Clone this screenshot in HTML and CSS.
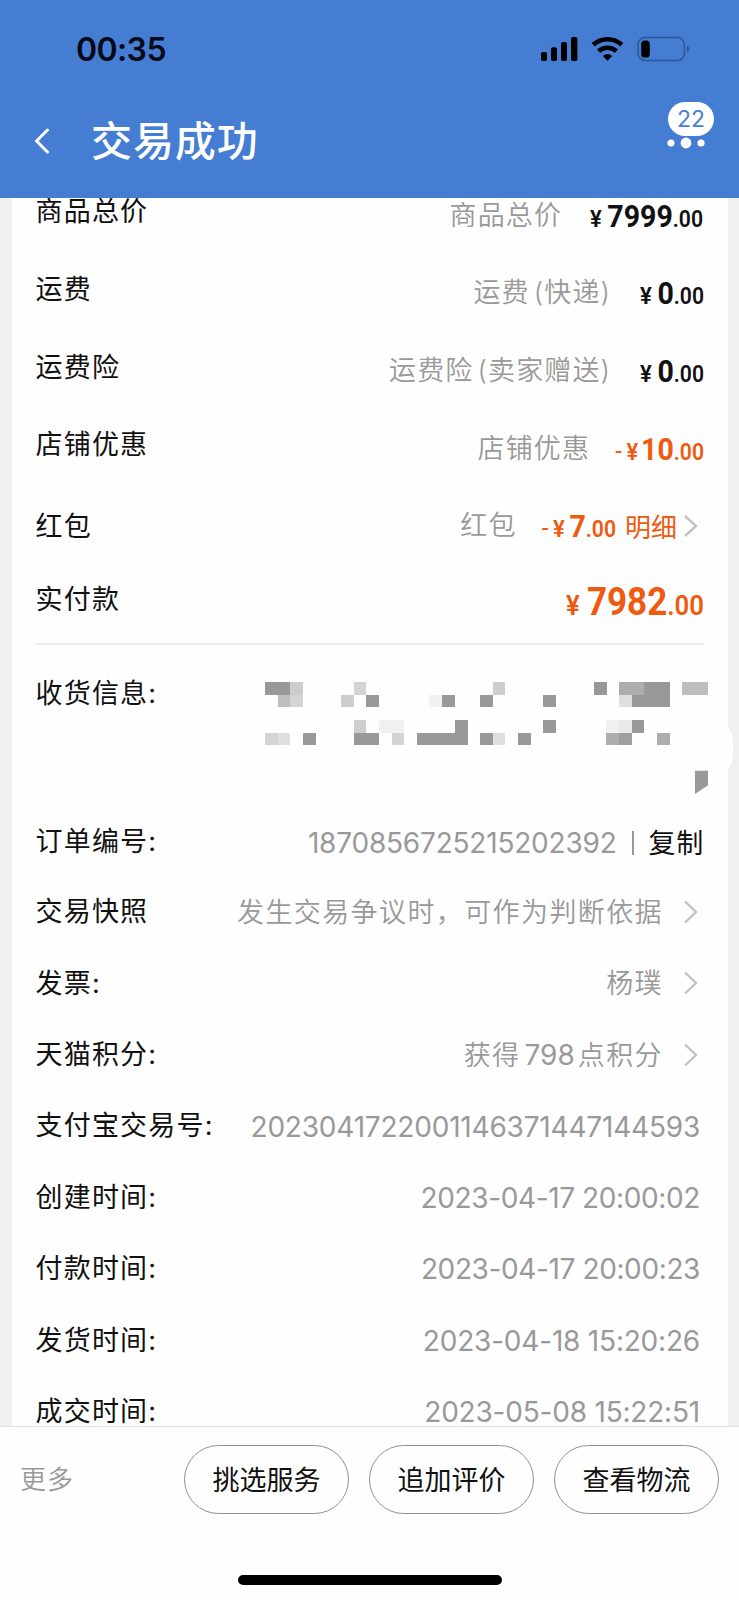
FILE: index.html
```html
<!DOCTYPE html>
<html lang="zh-CN">
<head>
<meta charset="utf-8">
<title>交易成功</title>
<link rel="stylesheet" href="styles.css">
</head>
<body>
<div class="phone">
  <header class="header">
    <div class="status">
      <span class="clock">00:35</span>
      <svg class="status-icons" width="150" height="26" viewBox="540 36 150 26">
        <rect x="541" y="52" width="6" height="9" rx="1.8"/>
        <rect x="551" y="47.3" width="6" height="13.7" rx="1.8"/>
        <rect x="561" y="42" width="6" height="19" rx="1.8"/>
        <rect x="571" y="37" width="6.4" height="24" rx="1.8"/>
        <path class="wave" d="M593.2 44.8 A21 21 0 0 1 621.8 44.8 M598.6 51.3 A13 13 0 0 1 616.4 51.3"/>
        <path d="M607.5 60.8 L602.8 56 Q607.5 51.8 612.2 56 Z"/>
        <rect class="cell" x="638" y="37.6" width="46.4" height="22.8" rx="7"/>
        <path class="cap" d="M687 45.5 Q689.4 46.6 689.4 49 Q689.4 51.4 687 52.6 Z"/>
        <rect x="641.2" y="40.5" width="8.6" height="17" rx="3.6"/>
      </svg>
    </div>
    <div class="nav">
      <svg class="back" width="16" height="26" viewBox="0 0 16 26"><path d="M13.5 2 L2.5 13 L13.5 24"/></svg>
      <h1 class="title">交易成功</h1>
      <div class="more-menu">
        <span class="badge">22</span>
        <svg width="38" height="12" viewBox="0 0 38 12"><circle cx="4" cy="6" r="3.6"/><circle cx="19" cy="6" r="5.4"/><circle cx="34" cy="6" r="3.6"/></svg>
      </div>
    </div>
  </header>

  <main class="content">
    <section class="card">
      <div class="row price-row"><span class="label">商品总价</span><span class="note">商品总价</span><span class="price w-7999"><i>¥</i><b>7999</b><em>.00</em></span></div>
      <div class="row price-row"><span class="label">运费</span><span class="note">运费 (快递)</span><span class="price"><i>¥</i><b>0</b><em>.00</em></span></div>
      <div class="row price-row"><span class="label">运费险</span><span class="note">运费险 (卖家赠送)</span><span class="price"><i>¥</i><b>0</b><em>.00</em></span></div>
      <div class="row price-row"><span class="label">店铺优惠</span><span class="note">店铺优惠</span><span class="price off w-10"><u>-</u><i>¥</i><b>10</b><em>.00</em></span></div>
      <div class="row price-row level"><span class="label">红包</span><span class="note">红包</span><span class="price off w-7"><u>-</u><i>¥</i><b>7</b><em>.00</em></span><span class="detail">明细</span><svg class="chev" width="14" height="24" viewBox="0 0 14 24"><path d="M1 2 L12 12 L1 22"/></svg></div>
      <div class="row total-row"><span class="label">实付款</span><span class="price off total"><i>¥</i><b>7982</b><em>.00</em></span></div>
      <div class="row address-row">
        <span class="label">收货信息:</span>
        <svg class="mosaic" width="443" height="112" viewBox="45 67 1329 336" shape-rendering="crispEdges">
          <g fill="#999"><path d="M45 67h76v38h-76z M349 105h38v38h-38z M576 105h39v38h-39z M690 105h38v38h-38z M879 105h39v38h-39z M1032 67h38v38h-38z M1183 67h77v76h-115v-38h38z M159 219h39v38h-39z M312 219h75v38h-75z M501 219h114v-38h39v76h-153z M690 219h38v38h-38z M804 219h39v38h-39z M879 181h39v38h-39z M1145 181h38v38h-38z"/></g>
          <path fill="#999" shape-rendering="auto" d="M1335 333h39v44l-39 26z"/>
          <path fill="#cdcdcd" d="M121 67h38v38h-38z M273 105h38v38h-38z M729 67h37v38h-37z M312 181h37v38h-37z"/>
          <path fill="#bebebe" d="M84 105h37v38h-37z M1296 67h78v38h-78z"/>
          <path fill="#d4d4d4" d="M121 105h38v38h-38z M312 67h37v38h-37z M45 219h39v38h-39z M426 219h36v38h-36z"/>
          <path fill="#dfdfdf" d="M84 219h37v38h-37z M729 219h37v38h-37z M1107 105h38v38h-38z"/>
          <path fill="#f1f1f1" d="M538 105h38v38h-38z M387 181h75v38h-75z M1069 181h38v38h-38z"/>
          <path fill="#e9e9e9" d="M1107 181h38v38h-38z"/>
          <path fill="#adadad" d="M1107 67h76v38h-76z M1069 219h38v38h-38z M1221 219h39v38h-39z"/>
          <path fill="#9f9f9f" d="M1107 219h38v38h-38z"/>
        </svg>
      </div>
      <div class="row order-row"><span class="label">订单编号:</span><span class="value num wide">1870856725215202392</span><span class="bar"></span><span class="copy">复制</span></div>
      <div class="row"><span class="label">交易快照</span><span class="value link">发生交易争议时，可作为判断依据</span><svg class="chev" width="14" height="24" viewBox="0 0 14 24"><path d="M1 1.5 L12 12 L1 22.5"/></svg></div>
      <div class="row"><span class="label">发票:</span><span class="value link">杨璞</span><svg class="chev" width="14" height="24" viewBox="0 0 14 24"><path d="M1 1.5 L12 12 L1 22.5"/></svg></div>
      <div class="row"><span class="label">天猫积分:</span><span class="value link">获得<span class="points">798</span>点积分</span><svg class="chev" width="14" height="24" viewBox="0 0 14 24"><path d="M1 1.5 L12 12 L1 22.5"/></svg></div>
      <div class="row"><span class="label">支付宝交易号:</span><span class="value num wide end">2023041722001146371447144593</span></div>
      <div class="row"><span class="label">创建时间:</span><span class="value num end">2023-04-17 20:00:02</span></div>
      <div class="row"><span class="label">付款时间:</span><span class="value num end">2023-04-17 20:00:23</span></div>
      <div class="row"><span class="label">发货时间:</span><span class="value num wide end">2023-04-18 15:20:26</span></div>
      <div class="row"><span class="label">成交时间:</span><span class="value num wide end">2023-05-08 15:22:51</span></div>
    </section>
    <span class="side-tab"></span>
  </main>

  <footer class="footer">
    <div class="actions">
      <span class="more">更多</span>
      <button class="btn">挑选服务</button>
      <button class="btn">追加评价</button>
      <button class="btn">查看物流</button>
    </div>
    <div class="home"></div>
  </footer>
</div>
</body>
</html>
```
FILE: styles.css
```css
* { box-sizing: border-box; }
body { margin: 0; font-family: Inter, "Noto Sans CJK SC", sans-serif; background: #fff; }
.phone { width: 739px; height: 1600px; display: flex; flex-direction: column; overflow: hidden; background: #fefefe; }

.header { flex: none; height: 198px; background: #457dd3; position: relative; }
.status { height: 98px; padding: 0 49px 0 76px; display: flex; align-items: center; justify-content: space-between; }
.clock { padding-top: 2px; font-size: 32px; font-weight: 600; line-height: 40px; letter-spacing: -0.6px; color: #030a18; }
.status-icons { fill: #000; }
.status-icons .wave { fill: none; stroke: #000; stroke-width: 4.6; }
.status-icons .cell { fill: none; stroke: #2c5797; stroke-width: 1.5; }
.status-icons .cap { fill: #2c5797; }
.nav { height: 86px; padding: 0 25px 0 34px; display: flex; align-items: center; }
.back path { fill: none; stroke: #fff; stroke-width: 3; stroke-linecap: round; stroke-linejoin: round; }
.title { margin: 0 auto 0 41px; padding-bottom: 7px; font: 500 41px/60px "Noto Sans CJK SC", sans-serif; letter-spacing: 0.9px; color: #fff; }
.more-menu { width: 47px; height: 86px; padding-top: 4px; display: flex; flex-direction: column; align-items: flex-end; }
.badge { width: 46px; height: 34px; border-radius: 17px; background: #fff; color: #457dd3; font-size: 23px; line-height: 35px; text-align: center; }
.more-menu svg { margin: 1px 9.5px 0 0; fill: #fff; flex: none; }

.content { flex: none; height: 1228px; overflow: hidden; position: relative; background: #f0f0f0; padding: 0 11px 0 12px; }
.card { margin-top: -21px; padding: 0 24px 0 23px; background: #fefefe; color: #111; }
.row { height: 71.35px; display: flex; align-items: center; white-space: nowrap; }
.label { margin-right: auto; padding: 1px 0 0 0.5px; font-size: 27px; line-height: 40px; letter-spacing: 1.2px; }
.note, .value { color: #999; font-size: 27px; line-height: 40px; letter-spacing: 1.4px; font-weight: 350; }
.value { padding-top: 1.5px; }
.note { letter-spacing: 1.1px; word-spacing: -4.5px; }
.price-row { height: 77.67px; }
.price-row .label { position: relative; top: -4px; }
.price-row.level .label { top: 0; }
.price { display: flex; align-items: baseline; justify-content: flex-end; margin-left: 27px; padding-top: 5px; font-family: Roboto, sans-serif; line-height: 34px; width: 66px; transform: scaleX(0.92); transform-origin: right center; }
.price i, .price em, .price b, .price u { font-style: normal; text-decoration: none; }
.price i { font-size: 24px; font-weight: 600; margin-right: 6px; }
.price b { font-size: 31px; font-weight: 700; }
.price em { font-size: 23px; font-weight: 600; }
.price u { font-size: 26px; margin-right: 5px; }
.off { color: #ee5a0f; }
.w-7999 { width: 114px; margin-right: 1px; }
.w-10 { width: 87px; }
.w-10 i { margin-right: 3px; }
.w-7 { width: 73px; }
.w-7 i { margin-right: 5px; }
.detail { margin: -2px 7px 0 8.5px; color: #ee5a0f; font-size: 26px; }
.chev { flex: none; margin-right: 6px; }
.chev path { fill: none; stroke: #c2c2c2; stroke-width: 2.4; }
.total-row { height: 80px; padding-bottom: 9px; border-bottom: 2px solid #ececec; }
.total { width: 140px; padding-top: 9px; }
.total i { font-size: 28px; margin-right: 8px; }
.total b { font-size: 38px; }
.total em { font-size: 28px; }
.address-row { height: 162px; align-items: flex-start; padding-top: 28px; }
.mosaic { margin: 9px -4px 0 0; }
.order-row { height: 69px; }
.num { font-size: 28px; font-weight: 400; letter-spacing: -0.38px; }
.num.wide { letter-spacing: -0.2px; }
.end { margin-right: 4px; }
.bar { width: 2px; height: 24px; margin: 2px 15px 0 15px; background: #999; }
.copy { font-size: 27px; letter-spacing: 0.7px; }
.link { margin-right: 21px; }
.points { font-size: 28px; font-weight: 400; letter-spacing: 0; margin: 0 3px 0 4px; }
.side-tab { position: absolute; right: 6px; top: 529px; width: 14px; height: 42px; border-radius: 8px / 18px; background: #fefefe; }

.footer { flex: none; height: 174px; border-top: 1px solid #e2e2e2; background: #fefefe; }
.actions { height: 148px; padding: 18px 20px 0; display: flex; gap: 20px; }
.more { margin-right: auto; color: #999; font-size: 26px; letter-spacing: 0.9px; line-height: 69px; font-weight: 350; }
.btn { width: 165px; height: 69px; border: 1.5px solid #909090; border-radius: 35px; background: #fefefe; color: #111; padding: 0 0 2px; font: 400 27px/60px "Noto Sans CJK SC", sans-serif; }
.home { width: 264px; height: 10px; margin: 0 auto; border-radius: 5px; background: #000; }
```
